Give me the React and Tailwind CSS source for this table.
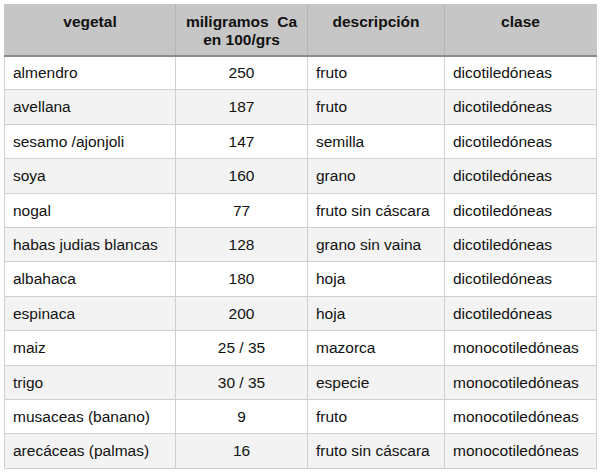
const rows = [
  ["almendro", "250", "fruto", "dicotiledóneas"],
  ["avellana", "187", "fruto", "dicotiledóneas"],
  ["sesamo /ajonjoli", "147", "semilla", "dicotiledóneas"],
  ["soya", "160", "grano", "dicotiledóneas"],
  ["nogal", "77", "fruto sin cáscara", "dicotiledóneas"],
  ["habas judias blancas", "128", "grano sin vaina", "dicotiledóneas"],
  ["albahaca", "180", "hoja", "dicotiledóneas"],
  ["espinaca", "200", "hoja", "dicotiledóneas"],
  ["maiz", "25 / 35", "mazorca", "monocotiledóneas"],
  ["trigo", "30 / 35", "especie", "monocotiledóneas"],
  ["musaceas (banano)", "9", "fruto", "monocotiledóneas"],
  ["arecáceas (palmas)", "16", "fruto sin cáscara", "monocotiledóneas"],
];

export default function App() {
  return (
    <div className="w-[600px] h-[475px] bg-white pt-[4px] pl-[4px] font-['Liberation_Sans',Arial,sans-serif] text-[15.5px] text-[#111]">
      <table className="border-collapse table-fixed w-[592px] border border-[#c9c9c9]">
        <colgroup>
          <col className="w-[171px]" />
          <col className="w-[132px]" />
          <col className="w-[137px]" />
          <col className="w-[152px]" />
        </colgroup>
        <thead>
          <tr className="h-[51px] bg-[#c6c6c6] border-b-2 border-[#8c8c8c]">
            <th className="align-top pt-[8px] font-bold leading-[18px] border-r border-[#b4b4b4]">vegetal</th>
            <th className="align-top pt-[8px] font-bold leading-[18px] border-r border-[#b4b4b4]">
              miligramos&nbsp; Ca
              <br />
              en 100/grs
            </th>
            <th className="align-top pt-[8px] font-bold leading-[18px] border-r border-[#b4b4b4]">descripción</th>
            <th className="align-top pt-[8px] font-bold leading-[18px]">clase</th>
          </tr>
        </thead>
        <tbody>
          {rows.map((r, i) => (
            <tr key={i} className={`h-[34.4px] ${i % 2 ? "bg-[#f3f3f3]" : "bg-white"}`}>
              <td className="pl-[8px] border border-[#cfcfcf] whitespace-nowrap">{r[0]}</td>
              <td className="text-center border border-[#cfcfcf]">{r[1]}</td>
              <td className="pl-[8px] border border-[#cfcfcf] whitespace-nowrap">{r[2]}</td>
              <td className="pl-[8px] border border-[#cfcfcf] whitespace-nowrap">{r[3]}</td>
            </tr>
          ))}
        </tbody>
      </table>
    </div>
  );
}
